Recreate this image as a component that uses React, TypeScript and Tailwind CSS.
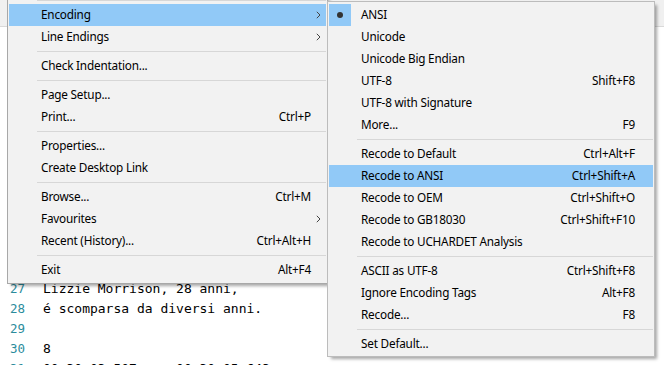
import React from "react";

type Row =
  | { kind: "sep" }
  | {
      kind: "item";
      label: string;
      shortcut?: string;
      sub?: boolean;
      active?: boolean;
      checked?: boolean;
    };

const S: Row = { kind: "sep" };
const it = (label: string, o: Partial<Omit<Extract<Row, { kind: "item" }>, "kind" | "label">> = {}): Row => ({
  kind: "item",
  label,
  ...o,
});

const menu1: Row[] = [
  S,
  it("Encoding", { sub: true, active: true }),
  it("Line Endings", { sub: true }),
  S,
  it("Check Indentation..."),
  S,
  it("Page Setup..."),
  it("Print...", { shortcut: "Ctrl+P" }),
  S,
  it("Properties..."),
  it("Create Desktop Link"),
  S,
  it("Browse...", { shortcut: "Ctrl+M" }),
  it("Favourites", { sub: true }),
  it("Recent (History)...", { shortcut: "Ctrl+Alt+H" }),
  S,
  it("Exit", { shortcut: "Alt+F4" }),
];

const menu2: Row[] = [
  it("ANSI", { checked: true }),
  it("Unicode"),
  it("Unicode Big Endian"),
  it("UTF-8", { shortcut: "Shift+F8" }),
  it("UTF-8 with Signature"),
  it("More...", { shortcut: "F9" }),
  S,
  it("Recode to Default", { shortcut: "Ctrl+Alt+F" }),
  it("Recode to ANSI", { shortcut: "Ctrl+Shift+A", active: true }),
  it("Recode to OEM", { shortcut: "Ctrl+Shift+O" }),
  it("Recode to GB18030", { shortcut: "Ctrl+Shift+F10" }),
  it("Recode to UCHARDET Analysis"),
  S,
  it("ASCII as UTF-8", { shortcut: "Ctrl+Shift+F8" }),
  it("Ignore Encoding Tags", { shortcut: "Alt+F8" }),
  it("Recode...", { shortcut: "F8" }),
  S,
  it("Set Default..."),
];

function Chevron() {
  return (
    <svg width="5" height="8" viewBox="0 0 5 8" className="block">
      <path d="M0.8 0.8 L4 4 L0.8 7.2" fill="none" stroke="#444" strokeWidth="1" />
    </svg>
  );
}

function MenuRows({ rows, arrows }: { rows: Row[]; arrows: boolean }) {
  return (
    <>
      {rows.map((r, i) =>
        r.kind === "sep" ? (
          <div key={i} className="h-[7px] flex items-center">
            <div className="ml-[28px] flex-1 h-px bg-[#d7d7d7]" />
          </div>
        ) : (
          <div
            key={i}
            className={
              "h-[22px] flex items-center " +
              (r.active ? "bg-[#91c9f7] " : "") +
              (arrows ? "pr-[5px]" : "pr-[18px]")
            }
          >
            <div
              className={
                "w-[22px] h-[22px] shrink-0 flex items-center justify-center " +
                (r.checked ? "bg-[#91c9f7]" : "")
              }
            >
              {r.checked && <div className="w-[6px] h-[6px] rounded-full bg-[#333]" />}
            </div>
            <span className="ml-[10px] flex-1 whitespace-nowrap">{r.label}</span>
            {r.shortcut && <span className="whitespace-nowrap">{r.shortcut}</span>}
            {arrows && (
              <div className="w-[10px] shrink-0 flex justify-end">{r.sub && <Chevron />}</div>
            )}
          </div>
        )
      )}
    </>
  );
}

const lines: [number, string][] = [
  [15, ""],
  [16, ""],
  [17, ""],
  [18, ""],
  [19, ""],
  [20, ""],
  [21, ""],
  [22, ""],
  [23, ""],
  [24, ""],
  [25, ""],
  [26, ""],
  [27, "Lizzie Morrison, 28 anni,"],
  [28, "é scomparsa da diversi anni."],
  [29, ""],
  [30, "8"],
  [31, "00:30:03,507 --> 00:30:05,643"],
];

export default function App() {
  return (
    <div
      className="relative w-[664px] h-[365px] overflow-hidden bg-white text-black"
      style={{ fontFamily: "'Noto Sans', 'Open Sans', sans-serif" }}
    >
      {/* toolbar strip */}
      <div className="h-[27px] bg-[#f0f0f0] border-b border-[#d9d9d9]" />
      {/* editor */}
      <div
        className="pt-[12px] text-[13px] leading-[20px]"
        style={{ fontFamily: "'DejaVu Sans Mono', 'Liberation Mono', monospace" }}
      >
        {lines.map(([n, t]) => (
          <div key={n} className="flex h-[20px]">
            <div className="w-[25px] text-right text-[12.5px] text-[#2b8c9c]">{n >= 27 ? n : ""}</div>
            <div className="ml-[18px] whitespace-pre">{t}</div>
          </div>
        ))}
      </div>

      {/* first menu */}
      <div className="absolute left-[7px] top-[-4px] w-[321px] bg-[#f2f2f2] border border-[#a8a8a8] px-px pb-[2px] text-[11.75px] tracking-[-0.2px] shadow-[3px_3px_3px_-1px_rgba(0,0,0,0.35)]">
        <MenuRows rows={menu1} arrows />
      </div>

      {/* second menu */}
      <div className="absolute left-[327px] top-[1px] w-[328px] bg-[#f2f2f2] border border-[#bcbcbc] px-px pt-[2px] pb-px text-[11.75px] tracking-[-0.2px] shadow-[3px_3px_3px_-1px_rgba(0,0,0,0.35)]">
        <MenuRows rows={menu2} arrows={false} />
      </div>
    </div>
  );
}
